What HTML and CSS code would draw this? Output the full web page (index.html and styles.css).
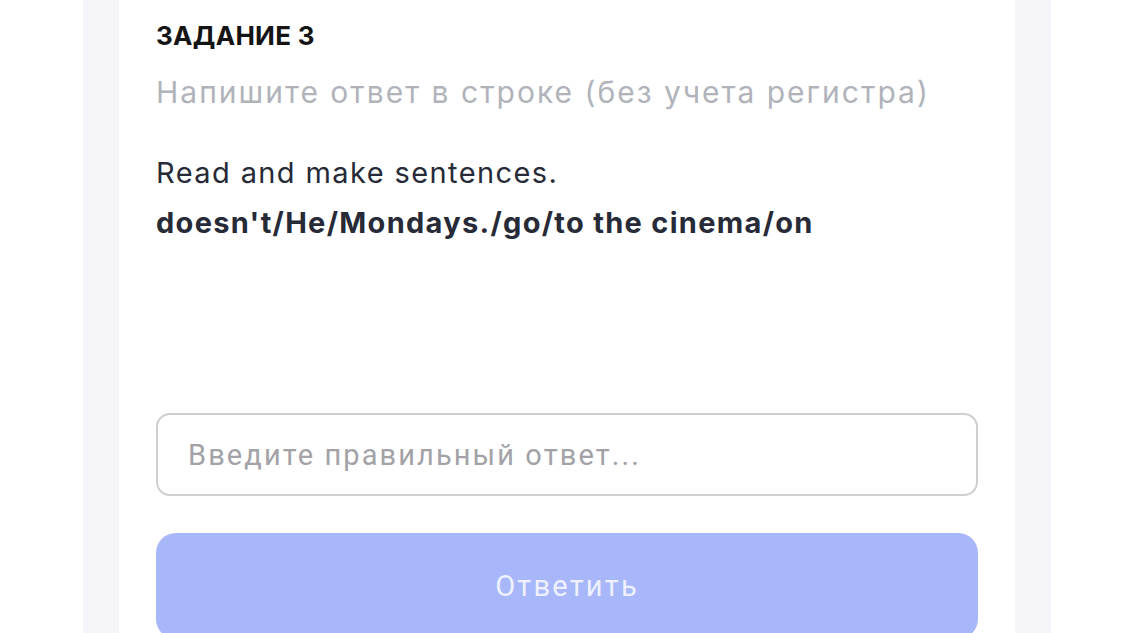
FILE: index.html
```html
<!DOCTYPE html>
<html lang="ru">
<head>
  <meta charset="UTF-8" />
  <meta name="viewport" content="width=device-width, initial-scale=1.0"/>
  <title>Задание 3</title>
  <link rel="stylesheet" href="styles.css">
</head>
<body>
  <div class="page">
    <div class="panel">
      <div class="card">
        <h2 class="task-title">ЗАДАНИЕ 3</h2>
        <p class="task-hint">Напишите ответ в строке (без учета регистра)</p>
        <div class="question">
          <p class="question-text">Read and make sentences.</p>
          <p class="question-text question-words">doesn't/He/Mondays./go/to the cinema/on</p>
        </div>
        <input class="answer-input" type="text" placeholder="Введите правильный ответ...">
        <button class="answer-btn" disabled>Ответить</button>
      </div>
    </div>
  </div>
</body>
</html>
```

FILE: styles.css
```css
body {
  margin: 0;
  background: #ffffff;
  font-family: Inter, "Noto Sans", sans-serif;
}

.page {
  display: flex;
  justify-content: center;
  height: 100vh;
  overflow: hidden;
}

.panel {
  width: 968px;
  padding: 0 36px;
  box-sizing: border-box;
  background: #f4f4f9;
  display: flex;
  flex-direction: column;
}

.card {
  flex: 1;
  background: #ffffff;
  padding: 20px 37px 40px;
  display: flex;
  flex-direction: column;
}

.task-title {
  margin: 0;
  font-size: 26px;
  line-height: 32px;
  font-weight: 700;
  letter-spacing: 0.3px;
  color: #141414;
}

.task-hint {
  margin: 22px 0 0;
  font-size: 30px;
  line-height: 36px;
  letter-spacing: 2px;
  color: #b1b3bb;
}

.question {
  margin-top: 38px;
  min-height: 265px;
}

.question-text {
  margin: 0;
  font-size: 29px;
  line-height: 50px;
  letter-spacing: 1.4px;
  color: #272a37;
}

.question-words {
  font-weight: 700;
  letter-spacing: 1.3px;
}

.answer-input {
  flex-shrink: 0;
  height: 83px;
  box-sizing: border-box;
  padding: 0 30px;
  border: 2px solid #cfcfd2;
  border-radius: 14px;
  font-family: Roboto, sans-serif;
  font-size: 29px;
  letter-spacing: 2.1px;
  color: #272a37;
  outline: none;
}

.answer-input::placeholder {
  color: #a2a2a7;
}

.answer-btn {
  flex-shrink: 0;
  margin-top: 37px;
  height: 106px;
  border: none;
  border-radius: 20px;
  background: #a8b7f9;
  color: #eef1ff;
  font-family: Roboto, sans-serif;
  font-size: 29px;
  letter-spacing: 2.2px;
  cursor: pointer;
}
```
